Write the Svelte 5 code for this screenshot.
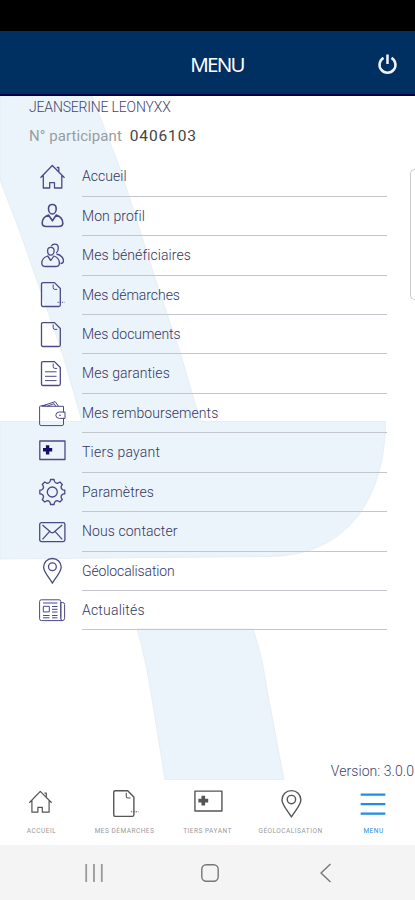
<script>
	const items = [
		{ icon: 'home', label: 'Accueil', spacing: 0.05 },
		{ icon: 'profile', label: 'Mon profil', spacing: 0.08 },
		{ icon: 'family', label: 'Mes bénéficiaires', spacing: 0.08 },
		{ icon: 'request', label: 'Mes démarches', spacing: -0.06 },
		{ icon: 'document', label: 'Mes documents', spacing: -0.06 },
		{ icon: 'warranty', label: 'Mes garanties', spacing: 0.08 },
		{ icon: 'wallet', label: 'Mes remboursements', spacing: 0.05 },
		{ icon: 'card', label: 'Tiers payant', spacing: 0.24 },
		{ icon: 'settings', label: 'Paramètres', spacing: 0.08 },
		{ icon: 'mail', label: 'Nous contacter', spacing: 0.08 },
		{ icon: 'pin', label: 'Géolocalisation', spacing: -0.12 },
		{ icon: 'news', label: 'Actualités', spacing: 0.2 }
	];

	const tabs = [
		{ icon: 'home', label: 'ACCUEIL' },
		{ icon: 'request', label: 'MES DÉMARCHES' },
		{ icon: 'card', label: 'TIERS PAYANT' },
		{ icon: 'pin', label: 'GÉOLOCALISATION' },
		{ icon: 'menu', label: 'MENU' }
	];

	let active = $state('menu');

	// eight-toothed gear outline around (14.3, 14)
	function gearPath() {
		const point = (r, deg) => {
			const a = ((deg - 90) * Math.PI) / 180;
			return `${(14.3 + r * Math.cos(a)).toFixed(2)} ${(14 + r * Math.sin(a)).toFixed(2)}`;
		};
		let d = '';
		for (let i = 0; i < 8; i++) {
			const a = i * 45;
			d += `${i ? 'L' : 'M'}${point(12.6, a - 8)}L${point(12.6, a + 8)}L${point(10.7, a + 12)}`;
			d += `Q${point(8.9, a + 22.5)} ${point(10.7, a + 33)}`;
		}
		return d + 'Z';
	}
</script>

{#snippet icon(name)}
	<svg class="icon" viewBox="0 0 28 28" aria-hidden="true">
		{#if name === 'home'}
			<path d="M2.5 14.8 14.3 2.5l12.2 12.3M18.8 4.5h2V9M5.3 12.5V25h6.4v-5.3h4.8V25h7.3V12.5" />
		{:else if name === 'profile'}
			<path class="bold" d="M14.3 2.5c-2.5 0-3.8 1.6-3.8 4.2 0 2.8 1.6 5.3 3.8 5.3s3.9-2.5 3.9-5.3c0-2.600-1.400-4.200-3.900-4.200Z" />
			<path class="bold" d="M10.5 13c-3.800 1.300-6.300 4.200-6.300 8.300 0 2.400 1.800 3.200 4 3.200h12.400c2.400 0 4.200-.8 4.200-3.200 0-4.100-2.600-7-6.500-8.300l-3.900 5.800Z" />
		{:else if name === 'family'}
			<path d="M12.8 5.300c-2.100 0-3.200 1.300-3.200 3.500 0 2.400 1.300 4.400 3.200 4.400s3.300-2 3.300-4.400c0-2.200-1.200-3.500-3.300-3.500Z" />
			<path d="M9.600 14c-3.400 1.100-5.800 3.400-5.800 7.200 0 2.400 2 3.300 4 3.300h9.600c2.200 0 4-.9 4-3.300 0-3.800-2.200-6.100-5.500-7.200l-3.100 4.500Z" />
			<path d="M13.200 4.200c.7-1.300 1.900-2 3.600-2 2.300 0 3.500 1.400 3.500 3.800 0 2-.8 4-2.200 5M18.500 12c4 1 7 3.500 7 7 0 1.400-1.200 2.400-3 2.500" />
		{:else if name === 'request' || name === 'document' || name === 'warranty'}
			<path d="M5 1.600h11.500l5.800 5.900V24q0 1.500-1.500 1.500H5q-1.500 0-1.500-1.500V3.100q0-1.500 1.500-1.500Z" />
			<path class="thin" d="M15.200 3.500v3.300q0 1.600 1.600 1.600h2.400" />
			{#if name === 'request'}
				<path class="dots" d="M19.500 21.300h7" />
			{:else if name === 'warranty'}
				<path class="thin" d="M7 11.800h11.500M7 16.300h11.500M7 20.600h11.500" />
			{/if}
		{:else if name === 'wallet'}
			<path class="thin" d="M3.500 6.300h22v6.200M25.500 17.800V24q0 1.600-1.600 1.600H3.200q-1.600 0-1.600-1.600V6.800q0-.8 1-.8l4.200-.9L17.200 1.600l3.200 4.500M9 6.200l7.200-2.500 1.500 2.500M4.500 5.800l4-.8" />
			<path class="thin" d="M27 12h-5.800q-3.400.3-3.400 3.200t3.400 3.200H27ZM21 15.200h2" />
		{:else if name === 'card'}
			<rect x="1.8" y="2" width="25.2" height="18.5" />
			<path class="solid" d="M7.900 6.200h3.400v2.900h2.900v3.400h-2.900v2.900H7.900v-2.900H5V9.100h2.900Z" />
		{:else if name === 'settings'}
			<path d={gearPath()} />
			<circle cx="14.3" cy="14" r="5" />
		{:else if name === 'mail'}
			<rect x="1.7" y="4.6" width="25.2" height="19" rx="1.8" />
			<path d="m4.500 7 8.300 7.200q1.500 1.200 3 0L24.200 7M4.500 21.400l7.200-8M24.200 21.400l-7.200-8" />
		{:else if name === 'pin'}
			<path d="M14.400 1.500c-5 0-8.800 3.700-8.800 8.600 0 5.200 4.700 9 8.800 16 4.100-7 8.800-10.800 8.800-16 0-4.900-3.800-8.600-8.800-8.600Z" />
			<circle cx="14.4" cy="9.8" r="3.9" />
		{:else if name === 'news'}
			<path class="thin" d="M22.800 21.500V4.500q0-1.700-1.700-1.700H3.300q-1.700 0-1.700 1.700v17.200q0 1.900 1.900 1.900h20.700q2.400 0 2.400-2.200V7.500q0-2-2-2h-1.800v16q0 2.100 1.600 2.100" />
			<path class="thin" d="M5.300 9.300h6v5.600h-6ZM5 6h14.500M14 9.500h5.500M14 12.300h5.500M14 15h5.500M5 18.500h6.500M14 18.500h5.500M5 20.800h6.500M14 20.800h5.500" />
		{:else if name === 'menu'}
			<path class="bars" d="M2.500 5.300h23M2.500 14h23M2.500 22.900h23" />
		{/if}
	</svg>
{/snippet}

<div class="screen">
	<div class="status-bar"></div>

	<header>
		<h1>MENU</h1>
		<button class="power" aria-label="Déconnexion" type="button">
			<svg viewBox="0 0 20 20" aria-hidden="true">
				<path d="M6.200 3.700a7.600 7.600 0 1 0 7.600 0M10 .5v9" />
			</svg>
		</button>
	</header>

	<main>
		<svg class="watermark" viewBox="0 96 415 684" aria-hidden="true">
			<path d="M0 96H92L121 171 159 290 181 355 194 400 201 421.500H385.500C385.500 480 361 555 270 556.500L0 559V421.500H82L63 355 21 235 0 180Z" />
			<path d="M137 629H253Q262 655 267 689L284 780H165L152 699Q146 660 137 629Z" />
		</svg>
		<div class="side-panel"></div>

		<p class="name">JEANSERINE LEONYXX</p>
		<p class="member">N° participant <span>0406103</span></p>

		<ul>
			{#each items as item}
				<li>
					{@render icon(item.icon)}
					<a href="#{item.icon}" style="letter-spacing: {item.spacing}px">{item.label}</a>
				</li>
			{/each}
		</ul>

		<p class="version">Version: 3.0.0</p>
	</main>

	<nav class="tabs">
		{#each tabs as tab}
			<button
				class="tab tab-{tab.icon}"
				class:active={active === tab.icon}
				type="button"
				onclick={() => (active = tab.icon)}
			>
				{@render icon(tab.icon)}
				<span>{tab.label}</span>
			</button>
		{/each}
	</nav>

	<div class="system-bar">
		<svg viewBox="0 0 20 20" aria-hidden="true"><path class="recents" d="M2.200 1v18M10 1v18M17.800 1v18" /></svg>
		<svg viewBox="0 0 20 20" aria-hidden="true"><rect x="1.8" y="1.8" width="16.4" height="16.4" rx="4.5" /></svg>
		<svg viewBox="0 0 20 20" aria-hidden="true"><path d="M14.500 1 5 10l9.500 9" /></svg>
	</div>
</div>

<style>
	:global(body) {
		margin: 0;
		background: #fff;
	}

	.screen {
		display: flex;
		flex-direction: column;
		width: 415px;
		height: 900px;
		overflow: hidden;
		font-family: 'Roboto', 'Noto Sans', sans-serif;
		background: #fff;
	}

	.status-bar {
		flex: 0 0 31px;
		background: #000;
	}

	header {
		box-sizing: border-box;
		flex: 0 0 65px;
		display: grid;
		grid-template-columns: 1fr auto 1fr;
		align-items: center;
		padding: 3px 17px 0 36px;
		background: #003061;
		border-bottom: 2px solid #00004f;
	}

	h1 {
		grid-column: 2;
		margin: 0;
		font-family: 'Noto Sans', sans-serif;
		font-size: 20.5px;
		font-weight: 400;
		line-height: 28px;
		letter-spacing: -1.8px;
		color: #fff;
	}

	button {
		padding: 0;
		border: none;
		background: none;
		font: inherit;
		cursor: pointer;
	}

	svg {
		display: block;
		fill: none;
		stroke: currentColor;
		stroke-linejoin: round;
	}

	.power {
		justify-self: end;
		color: #f0f2fa;
	}

	.power svg {
		width: 21px;
		height: 21px;
		stroke-width: 2.4;
	}

	main {
		position: relative;
		flex: 0 0 684px;
		display: flex;
		flex-direction: column;
		color: #43436f;
	}

	.watermark {
		position: absolute;
		inset: 0;
		width: 415px;
		height: 684px;
		fill: #ebf4fa;
		stroke: #e2eaef;
		stroke-width: 0.7;
	}

	.side-panel {
		box-sizing: border-box;
		position: absolute;
		top: 73px;
		right: 0;
		width: 5px;
		height: 131px;
		border: 1.5px solid #ccc;
		border-right: none;
		border-radius: 5px 0 0 5px;
	}

	p,
	ul {
		position: relative;
		margin: 0;
	}

	.name {
		padding-left: 29px;
		font-size: 14px;
		font-weight: 300;
		line-height: 22px;
		letter-spacing: -0.18px;
	}

	.member {
		padding: 7px 0 0 29px;
		font-size: 15px;
		line-height: 22px;
		letter-spacing: 0.07px;
		color: #999da3;
	}

	.member span {
		margin-left: 4px;
		font-size: 15.5px;
		letter-spacing: 0.9px;
		color: #444;
	}

	ul {
		padding: 10.2px 28px 0 38px;
		list-style: none;
	}

	li {
		display: flex;
		align-items: center;
		gap: 16px;
		height: 39.45px;
		color: #4a4a86;
	}

	.icon {
		flex: none;
		width: 28px;
		height: 28px;
		stroke-width: 1.3;
	}

	.icon .thin {
		stroke-width: 1;
	}

	.icon .bold {
		stroke-width: 1.6;
	}

	.icon .dots {
		stroke-width: 1;
		stroke-dasharray: 1.2 1;
	}

	.icon .solid {
		fill: currentColor;
		stroke: none;
	}

	.icon .bars {
		stroke-width: 2.1;
	}

	li .solid {
		color: #10106c;
	}

	li a {
		box-sizing: border-box;
		flex: 1;
		height: 100%;
		border-bottom: 1px solid #c3c7cd;
		font-size: 14px;
		font-weight: 300;
		line-height: 38.8px;
		color: #35355f;
		text-decoration: none;
	}

	.version {
		margin-top: auto;
		padding-right: 1px;
		font-size: 14px;
		font-weight: 300;
		line-height: 18px;
		letter-spacing: 0.05px;
		text-align: right;
	}

	.tabs {
		flex: 0 0 65px;
		display: grid;
		grid-template-columns: repeat(5, 1fr);
	}

	.tab {
		display: flex;
		flex-direction: column;
		align-items: center;
		color: #555;
	}

	.tab .icon {
		width: 30px;
		height: 30px;
		margin-top: 9px;
	}

	.tab-home .icon {
		width: 26px;
		height: 26px;
		margin: 9px 3px 4px 0;
	}

	.tab-menu .icon {
		margin-right: 1px;
	}

	.tab span {
		margin-top: 8px;
		font-size: 6.5px;
		line-height: 8px;
		letter-spacing: 0.5px;
		color: #999;
	}

	.tab.active,
	.tab.active span {
		color: #1e8fe6;
	}

	.system-bar {
		flex: 1;
		display: flex;
		align-items: center;
		justify-content: center;
		gap: 96px;
		padding-left: 5px;
		background: #f4f4f4;
		color: #777;
	}

	.system-bar svg {
		width: 20px;
		height: 20px;
		stroke-width: 1.4;
	}

	.system-bar .recents {
		color: #999;
		stroke-width: 1.8;
	}
</style>
